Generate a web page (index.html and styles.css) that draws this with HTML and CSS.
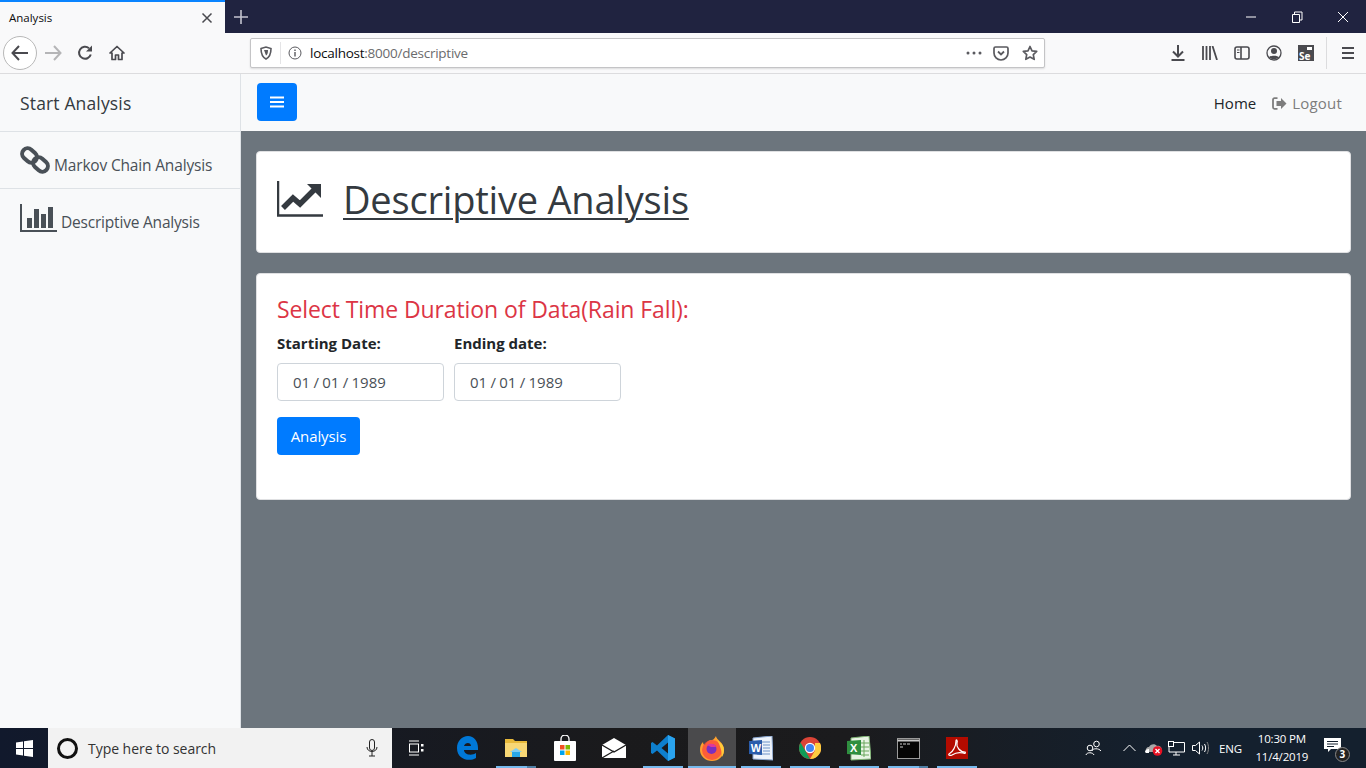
FILE: index.html
```html
<!DOCTYPE html>
<html lang="en">
<head>
  <meta charset="UTF-8">
  <meta name="viewport" content="width=device-width, initial-scale=1.0">
  <title>Analysis</title>
  <link rel="stylesheet" href="styles.css">
</head>
<body>
  <!-- browser tab strip -->
  <div class="tabstrip">
    <div class="tab">
      <span class="tab-title">Analysis</span>
      <svg class="tab-close" width="12" height="12" viewBox="0 0 12 12"><path d="M1.5 1.5l9 9M10.5 1.5l-9 9" stroke="#4a4a4f" stroke-width="1.5" fill="none"/></svg>
    </div>
    <svg class="tab-new" width="14" height="14" viewBox="0 0 14 14"><path d="M7 0v14M0 7h14" stroke="#c3c4cf" stroke-width="1.6" fill="none"/></svg>
    <div class="win-controls">
      <svg class="win-btn" width="46" height="12" viewBox="0 0 46 12"><path d="M18 6h10" stroke="#fff" fill="none"/></svg>
      <svg class="win-btn" width="46" height="12" viewBox="0 0 46 12"><path d="M18.500 3.500h7v8h-7zM20.500 3.500v-2.500h7.500v8h-2.500" stroke="#fff" fill="none"/></svg>
      <svg class="win-btn" width="46" height="12" viewBox="0 0 46 12"><path d="M18 1l10 10M28 1l-10 10" stroke="#fff" fill="none"/></svg>
    </div>
  </div>

  <!-- browser toolbar -->
  <div class="toolbar">
    <div class="back-btn">
      <svg width="18" height="16" viewBox="0 0 18 16"><path d="M8 1L1.500 8 8 15M2 8h15" stroke="#4a4a4f" stroke-width="2" fill="none"/></svg>
    </div>
    <div class="tool-btn">
      <svg width="18" height="16" viewBox="0 0 18 16"><path d="M10 1l6.500 7L10 15M16 8H1" stroke="#b5b5b7" stroke-width="2" fill="none"/></svg>
    </div>
    <div class="tool-btn">
      <svg width="16" height="16" viewBox="0 0 16 16"><path d="M13.800 9.500A6 6 0 1 1 12 3.200" stroke="#4a4a4f" stroke-width="2" fill="none"/><path d="M15 0.500v6h-6z" fill="#4a4a4f"/></svg>
    </div>
    <div class="tool-btn">
      <svg width="16" height="16" viewBox="0 0 16 16"><path d="M8 1.500L1 8h2v6.500h3.500V10h3v4.500H13V8h2z" stroke="#4a4a4f" stroke-width="1.700" fill="none" stroke-linejoin="round"/></svg>
    </div>

    <div class="urlbar">
      <svg class="url-shield" width="14" height="14" viewBox="0 0 14 14"><path d="M2 2.500L7 1l5 1.500c0 5-1 8.500-5 10.500-4-2-5-5.500-5-10.500z" stroke="#5a5a5f" stroke-width="1.600" fill="none"/><path d="M5 4h4c0 3-.5 4.500-2 5.500z" fill="#5a5a5f"/></svg>
      <span class="url-sep"></span>
      <svg width="14" height="14" viewBox="0 0 14 14"><circle cx="7" cy="7" r="6" stroke="#5a5a5f" fill="none"/><path d="M7 6v4.500M7 3.500v1.500" stroke="#5a5a5f" stroke-width="1.400"/></svg>
      <span class="url-text">localhost<span class="url-path">:8000/descriptive</span></span>
      <svg class="url-more" width="16" height="4" viewBox="0 0 16 4"><circle cx="2" cy="2" r="1.500" fill="#5a5a5f"/><circle cx="8" cy="2" r="1.500" fill="#5a5a5f"/><circle cx="14" cy="2" r="1.500" fill="#5a5a5f"/></svg>
      <svg class="url-pocket" width="16" height="15" viewBox="0 0 16 15"><path d="M2.500 1h11A1.500 1.500 0 0 1 15 2.500V7A7 7 0 0 1 1 7V2.500A1.500 1.500 0 0 1 2.500 1z" stroke="#5a5a5f" stroke-width="1.700" fill="none"/><path d="M5 5.500l3 3 3-3" stroke="#5a5a5f" stroke-width="1.800" fill="none"/></svg>
      <svg width="16" height="16" viewBox="0 0 16 16"><path d="M8 1.500l2 4.300 4.700.6-3.400 3.200.9 4.700L8 12l-4.200 2.300.9-4.700L1.300 6.400 6 5.800z" stroke="#5a5a5f" stroke-width="1.700" fill="none" stroke-linejoin="round"/></svg>
    </div>

    <div class="tool-right">
      <svg width="16" height="16" viewBox="0 0 16 16"><path d="M8 0v11M3 6.500L8 11.500l5-5" stroke="#4a4a4f" stroke-width="2" fill="none"/><path d="M1.500 15h13" stroke="#4a4a4f" stroke-width="2"/></svg>
      <svg width="16" height="14" viewBox="0 0 16 14"><path d="M1 0v14M4.500 0v14M8 0v14M10.500 0l4.500 14" stroke="#4a4a4f" stroke-width="1.800" fill="none"/></svg>
      <svg width="16" height="14" viewBox="0 0 16 14"><rect x="1" y="1" width="14" height="12" rx="2" stroke="#4a4a4f" stroke-width="1.600" fill="none"/><path d="M7 1v12" stroke="#4a4a4f" stroke-width="1.600"/><path d="M3 4h2.500M3 6.500h2.500" stroke="#4a4a4f"/></svg>
      <svg width="16" height="16" viewBox="0 0 16 16"><circle cx="8" cy="8" r="7" stroke="#4a4a4f" stroke-width="1.300" fill="none"/><circle cx="8" cy="6" r="3" fill="#4a4a4f"/><path d="M3 12.500c1-2.500 9-2.500 10 0-2.500 2-7.500 2-10 0z" fill="#4a4a4f"/></svg>
      <div class="se-ext">
        <span class="se-cam"></span>
        <span class="se-text">Se</span>
      </div>
      <span class="tool-sep"></span>
      <svg class="tool-menu" width="14" height="12" viewBox="0 0 14 12"><path d="M1 1h12M1 6h12M1 11h12" stroke="#4a4a4f" stroke-width="2"/></svg>
    </div>
  </div>

  <!-- the page itself -->
  <div class="page">
    <nav class="sidebar">
      <div class="sidebar-header">Start Analysis</div>
      <a class="side-link">
        <svg class="side-chain" width="30" height="30" viewBox="0 0 30 30">
          <rect x="1.500" y="5" width="16" height="11" rx="5.500" transform="rotate(42 9.500 10.500)" stroke="#495057" stroke-width="4" fill="none"/>
          <rect x="12.500" y="14" width="16" height="11" rx="5.500" transform="rotate(42 20.500 19.500)" stroke="#495057" stroke-width="4" fill="none"/>
        </svg>
        <span>Markov Chain Analysis</span>
      </a>
      <a class="side-link side-link-last">
        <svg class="side-bars" width="37" height="28" viewBox="0 0 37 28">
          <path d="M1 0v27h36" stroke="#495057" stroke-width="2" fill="none"/>
          <rect x="7" y="14" width="5" height="10" fill="#495057"/>
          <rect x="14" y="5" width="5" height="19" fill="#495057"/>
          <rect x="21" y="10" width="5" height="14" fill="#495057"/>
          <rect x="28" y="3" width="5" height="21" fill="#495057"/>
        </svg>
        <span>Descriptive Analysis</span>
      </a>
    </nav>

    <div class="main">
      <div class="topbar">
        <button class="burger">
          <svg width="14" height="12" viewBox="0 0 14 12"><path d="M0 1.500h14M0 6h14M0 10.500h14" stroke="#fff" stroke-width="2.200"/></svg>
        </button>
        <div class="top-links">
          <a class="top-link">Home</a>
          <a class="top-link top-link-muted">
            <svg width="15" height="13" viewBox="0 0 15 13"><path d="M5.500 1.200H2.500A1.500 1.500 0 0 0 1 2.700v7.600a1.500 1.500 0 0 0 1.500 1.500h3" stroke="#7d7d7d" stroke-width="1.800" fill="none"/><path d="M9 1l5.500 5.500L9 12V9H4.500V4H9z" fill="#7d7d7d"/></svg>
            Logout
          </a>
        </div>
      </div>

      <div class="content">
        <div class="card card-title">
          <svg width="46" height="36" viewBox="0 0 46 36">
            <path d="M1 0v34.500h45" stroke="#343a40" stroke-width="2.500" fill="none"/>
            <path d="M6 27l10-10 7 6 14-14" stroke="#343a40" stroke-width="5.500" fill="none"/>
            <path d="M30 3h14v14z" fill="#343a40"/>
          </svg>
          <h1>Descriptive Analysis</h1>
        </div>
        <div class="card card-form">
          <h4>Select Time Duration of Data(Rain Fall):</h4>
          <form class="date-form">
            <div class="date-field">
              <label>Starting Date:</label>
              <input type="text" value="01 / 01 / 1989">
            </div>
            <div class="date-field">
              <label>Ending date:</label>
              <input type="text" value="01 / 01 / 1989">
            </div>
          </form>
          <button class="btn-analysis">Analysis</button>
        </div>
      </div>
    </div>
  </div>

  <!-- windows taskbar -->
  <div class="taskbar">
    <div class="start">
      <svg width="17" height="17" viewBox="0 0 17 17"><path d="M0 2.500L7 1.500V8H0zM8 1.300L17 0v8H8zM0 9h7v6.500L0 14.500zM8 9h9v8l-9-1.300z" fill="#fff"/></svg>
    </div>
    <div class="searchbox">
      <span class="cortana"></span>
      <span class="search-text">Type here to search</span>
      <svg class="search-mic" width="12" height="18" viewBox="0 0 12 18"><rect x="3.500" y="0.500" width="5" height="11" rx="2.500" stroke="#222" fill="none"/><path d="M1 8c0 6 10 6 10 0M6 13v4M3 17h6" stroke="#222" fill="none"/></svg>
    </div>
    <div class="task-view">
      <svg width="16" height="16" viewBox="0 0 16 16"><path d="M1 1h10M1 15h10" stroke="#fff"/><rect x="1.500" y="4" width="9" height="8" stroke="#fff" fill="none"/><rect x="13" y="4" width="2.500" height="2.500" fill="#fff"/><rect x="13" y="9" width="2.500" height="2.500" fill="#fff"/></svg>
    </div>

    <div class="task-icons">
      <div class="task-cell">
        <svg width="22" height="24" viewBox="0 0 22 24"><path d="M1 12C1 5 6 0 12 0c6 0 10 5 10 12v2H8c0 5 8 6 12 3v5c-6 4-19 2-19-10zm7-2h7c0-4-6-4-7 0z" fill="#0078d7"/></svg>
      </div>
      <div class="task-cell task-cell-stack">
        <svg width="22" height="20" viewBox="0 0 22 20"><path d="M0 1h8l2 2h12v3H0z" fill="#e8b93a"/><path d="M0 5h22v14H0z" fill="#f8d775"/><path d="M7 19v-5h8v5z" fill="#29a8e8"/><path d="M5 14l6-4 6 4z" fill="#7fcdf2"/></svg>
      </div>
      <div class="task-cell">
        <svg width="22" height="26" viewBox="0 0 22 26"><path d="M7 7V4a4 4 0 0 1 8 0v3" stroke="#fff" stroke-width="1.300" fill="none"/><rect y="6" width="22" height="20" rx="1" fill="#fff"/><rect x="6" y="10" width="4.500" height="4.500" fill="#f25022"/><rect x="11.500" y="10" width="4.500" height="4.500" fill="#7fba00"/><rect x="6" y="15.500" width="4.500" height="4.500" fill="#00a4ef"/><rect x="11.500" y="15.500" width="4.500" height="4.500" fill="#ffb900"/></svg>
      </div>
      <div class="task-cell">
        <svg width="24" height="20" viewBox="0 0 24 20"><path d="M0 7L12 0l12 7v13H0z" fill="#fff"/><path d="M0 7l12 7 12-7" stroke="#1a1a1a" stroke-width="1.400" fill="none"/><path d="M0 20l12-7" stroke="#1a1a1a" stroke-width="1.200" fill="none"/></svg>
      </div>
      <div class="task-cell task-cell-open">
        <svg width="24" height="26" viewBox="0 0 24 26"><path d="M17 0l7 3.500v19L17 26 6 15.500 1.500 19 0 18v-10l1.500-1L6 10.500zm0 7.500L10.500 13l6.500 5.500z" fill="#0e7fcd"/><path d="M17 0l7 3.500v19L17 26z" fill="#2aa3ee"/></svg>
      </div>
      <div class="task-cell task-cell-active">
        <svg width="24" height="25" viewBox="0 0 24 25"><path d="M16 0c0 4 8 6 8 14a12 11 0 0 1-24 0c0-4 1-6 3-8 0 2 1 3 2 3 1-3 4-5 7-5 1 0 2-1 4-4z" fill="#ff9f2e"/><circle cx="12" cy="14" r="10" fill="#f9473d" opacity=".75"/><path d="M16 1c0 4 8 6 8 13 0 3-1 5-2 7 0-8-3-13-6-20z" fill="#ffcb3a"/><circle cx="11.500" cy="13" r="5" fill="#7b2fbf"/><path d="M7 9c3-2 8-2 9 2l-5 0z" fill="#e0389a"/></svg>
      </div>
      <div class="task-cell task-cell-open">
        <svg width="24" height="25" viewBox="0 0 24 25"><path d="M4 2l19-2 1 24-20-1z" fill="#eef3fb"/><path d="M4 2l19-2 1 24-20-1z" stroke="#8aa6cf" fill="none"/><path d="M13 6h8M14 9h7M14 12h7M14 15h7M8 18h13" stroke="#6f93c9"/><path d="M0 5l13-1v15L0 18z" fill="#2a5cab"/><text class="office-letter" x="1.800" y="15.500">W</text></svg>
      </div>
      <div class="task-cell task-cell-open">
        <svg width="22" height="22" viewBox="0 0 22 22"><circle cx="11" cy="11" r="11" fill="#db4437"/><path d="M1.500 5.500L6.500 14 11 22a11 11 0 0 1-9.500-16.500z" fill="#0f9d58"/><path d="M11 22l5-8.500 0-7.500h5a11 11 0 0 1-10 16z" fill="#ffcd40"/><circle cx="11" cy="11" r="5.200" fill="#fff"/><circle cx="11" cy="11" r="4" fill="#4285f4"/></svg>
      </div>
      <div class="task-cell task-cell-open">
        <svg width="24" height="25" viewBox="0 0 24 25"><path d="M4 2l18-2 2 23-20 1z" fill="#e8f4e4"/><path d="M4 2l18-2 2 23-20 1z" stroke="#7fb474" fill="none"/><path d="M14 7h8M14 11h8M14 15h8M14 19h8M17 4v17" stroke="#6aa75c"/><path d="M0 5l14-1v15L0 18z" fill="#2f8f3f"/><text class="office-letter" x="3" y="15.500">X</text></svg>
      </div>
      <div class="task-cell task-cell-stack">
        <svg width="23" height="21" viewBox="0 0 23 21"><rect x=".5" y=".5" width="22" height="20" fill="#050505" stroke="#9a9a9a"/><path d="M.5 2.500h22" stroke="#c9c9c9" stroke-width="2"/><path d="M3 6h2M6 6h3M10 6h3M3 9h3" stroke="#d0d0d0"/></svg>
      </div>
      <div class="task-cell task-cell-open">
        <svg width="22" height="22" viewBox="0 0 22 22"><rect width="22" height="22" fill="#b30b00"/><path d="M3 17c4-2 7-8 7-13 0-2 2-1 1 2-1 4 3 9 8 9 1 1 0 2-2 1-4-1-8 0-11 2-2 1-4 0-3-1z" stroke="#fff" stroke-width="1.200" fill="none"/></svg>
      </div>
    </div>

    <div class="tray">
      <svg class="tray-people" width="17" height="16" viewBox="0 0 17 16"><circle cx="11.500" cy="4" r="2.800" stroke="#fff" fill="none"/><path d="M7 11c.5-3 7-3 9 0" stroke="#fff" fill="none"/><circle cx="5" cy="8" r="2.800" stroke="#fff" fill="none"/><path d="M1 15c.5-3 7-3 8 0" stroke="#fff" fill="none"/></svg>
      <svg class="tray-chevron" width="13" height="8" viewBox="0 0 13 8"><path d="M.5 7l6-6 6 6" stroke="#fff" fill="none"/></svg>
      <svg class="tray-cloud" width="18" height="15" viewBox="0 0 18 15"><path d="M1 11c-1-3 1-5 3-5 1-3 6-4 8-1 3-1 5 1 5 6z" fill="#a8a8a8"/><path d="M0 11c0-2 2-3 4-3v4H1z" fill="#fff"/><circle cx="12.500" cy="10" r="4.800" fill="#e81123"/><path d="M10.500 8l4 4M14.500 8l-4 4" stroke="#fff" stroke-width="1.300"/></svg>
      <svg class="tray-network" width="17" height="15" viewBox="0 0 17 15"><path d="M5.500 1.500H16.500V11H1V6M8 11v3M5 14h7" stroke="#fff" fill="none"/><rect x=".5" y=".5" width="5" height="5" stroke="#fff" fill="#14202e"/></svg>
      <svg class="tray-volume" width="17" height="14" viewBox="0 0 17 14"><path d="M.5 4.500h3l4-3.500v12l-4-3.500h-3z" stroke="#fff" fill="none"/><path d="M10 4.500c1 1.500 1 3.500 0 5M12.500 3c1.500 2.500 1.500 5.500 0 8" stroke="#fff" fill="none"/><path d="M15 1c2 3.500 2 8.500 0 12" stroke="#888" fill="none"/></svg>
      <span class="tray-lang">ENG</span>
      <div class="tray-clock">
        <span>10:30 PM</span>
        <span>11/4/2019</span>
      </div>
      <div class="tray-notify">
        <svg width="17" height="15" viewBox="0 0 17 15"><path d="M0 0h17v11H7l-3 3v-3H0z" fill="#fff"/><path d="M3 3.500h11M3 6h11M3 8.500h7" stroke="#14202e"/></svg>
        <span class="notify-badge">3</span>
      </div>
    </div>
  </div>
</body>
</html>
```

FILE: styles.css
```css
html, body {
  height: 100%;
}

body {
  margin: 0;
  width: 1366px;
  height: 768px;
  overflow: hidden;
  display: flex;
  flex-direction: column;
  font-family: "Open Sans", "Noto Sans", sans-serif;
  color: #212529;
}

/* browser tab strip */
.tabstrip {
  height: 33px;
  flex: none;
  display: flex;
  align-items: center;
  background: #202340;
}

.tab {
  width: 225px;
  height: 33px;
  box-sizing: border-box;
  display: flex;
  align-items: center;
  justify-content: space-between;
  padding: 0 12px 0 9px;
  background: #f9f9fa;
  border-top: 2px solid #0a84ff;
}

.tab-title {
  font-size: 11.500px;
  color: #0c0c0d;
}

.tab-new {
  margin-left: 9px;
}

.win-controls {
  margin-left: auto;
  display: flex;
  height: 33px;
  align-items: center;
}

.win-btn {
  display: block;
}

/* browser toolbar */
.toolbar {
  height: 41px;
  flex: none;
  box-sizing: border-box;
  display: flex;
  align-items: center;
  padding-left: 3px;
  background: #f9f9fa;
  border-bottom: 1px solid #dcdcde;
}

.back-btn {
  width: 32px;
  height: 32px;
  flex: none;
  display: flex;
  align-items: center;
  justify-content: center;
  border: 1px solid #b8b8b8;
  border-radius: 50%;
  background: #fff;
}

.tool-btn {
  width: 32px;
  height: 32px;
  flex: none;
  display: flex;
  align-items: center;
  justify-content: center;
}

.urlbar {
  width: 795px;
  height: 30px;
  margin-left: 117px;
  box-sizing: border-box;
  flex: none;
  display: flex;
  align-items: center;
  gap: 7px;
  padding: 0 6px 0 8px;
  background: #fff;
  border: 1px solid #c4c4c6;
  border-radius: 2px;
  box-shadow: 0 1px 2px rgba(0, 0, 0, 0.12);
}

.url-sep {
  width: 1px;
  height: 22px;
  background: #e4e4e6;
}

.url-text {
  flex: 1;
  margin-left: 1px;
  font-size: 13.500px;
  letter-spacing: -0.25px;
  color: #0c0c0d;
}

.url-path {
  color: #6b6b6d;
}

.url-more {
  margin-right: 4px;
}

.url-pocket {
  margin-right: 6px;
}

.tool-right {
  flex: 1;
  display: flex;
  align-items: center;
  gap: 16px;
  padding-left: 125px;
}

.se-ext {
  width: 16px;
  height: 16px;
  position: relative;
  background: #4a4a4f;
}

.se-cam {
  position: absolute;
  top: 2px;
  right: 2px;
  width: 5px;
  height: 3px;
  background: #fff;
}

.se-text {
  position: absolute;
  left: 1px;
  bottom: 0;
  font-size: 10px;
  line-height: 10px;
  font-weight: 700;
  color: #fff;
}

.tool-sep {
  width: 1px;
  height: 32px;
  margin-left: -4px;
  background: #dcdcde;
}

.tool-menu {
  margin-left: -2px;
}

/* page */
.page {
  flex: 1;
  min-height: 0;
  display: flex;
}

.sidebar {
  width: 241px;
  flex: none;
  box-sizing: border-box;
  background: #f8f9fa;
  border-right: 1px solid #dee2e6;
}

.sidebar-header {
  height: 58px;
  box-sizing: border-box;
  padding-left: 20px;
  font-size: 17.500px;
  line-height: 58px;
  letter-spacing: 0.15px;
  color: #343a40;
  border-bottom: 1px solid #dee2e6;
}

.side-link {
  height: 57px;
  box-sizing: border-box;
  display: flex;
  align-items: flex-end;
  padding: 0 0 12px 20px;
  gap: 5px;
  font-size: 15.500px;
  letter-spacing: -0.17px;
  line-height: 22px;
  color: #495057;
  border-bottom: 1px solid #dee2e6;
}

.side-link-last {
  border-bottom: none;
  padding-bottom: 13px;
  gap: 4px;
  letter-spacing: -0.2px;
}

.side-chain {
  display: block;
  margin-bottom: 1px;
  margin-right: -1px;
}

.side-bars {
  display: block;
  margin-bottom: 1px;
}

.main {
  flex: 1;
  min-width: 0;
  display: flex;
  flex-direction: column;
  background: #6c757d;
}

.topbar {
  height: 57px;
  flex: none;
  box-sizing: border-box;
  display: flex;
  align-items: center;
  justify-content: space-between;
  padding: 0 24px 1px 16px;
  background: #f8f9fa;
}

.burger {
  width: 40px;
  height: 38px;
  display: flex;
  align-items: center;
  justify-content: center;
  padding: 0;
  border: none;
  border-radius: 4px;
  background: #007bff;
}

.top-links {
  display: flex;
  align-items: center;
  gap: 16px;
  padding-top: 2px;
}

.top-link {
  display: flex;
  align-items: center;
  gap: 5px;
  font-size: 15px;
  color: #212529;
}

.top-link-muted {
  color: #7d7d7d;
  letter-spacing: 0.2px;
}

.content {
  flex: 1;
  display: flex;
  flex-direction: column;
  gap: 20px;
  padding: 20px 15px 0;
}

.card {
  box-sizing: border-box;
  background: #fff;
  border: 1px solid #dfe0e2;
  border-radius: 4px;
}

.card-title {
  height: 102px;
  display: flex;
  align-items: flex-start;
  gap: 20px;
  padding: 29px 20px 0;
}

.card-title h1 {
  margin: 0;
  font-size: 38px;
  font-weight: 400;
  line-height: 36px;
  letter-spacing: -0.2px;
  color: #343a40;
  text-decoration: underline;
  text-decoration-thickness: 2px;
  text-underline-offset: 4px;
}

.card-form {
  height: 227px;
  padding: 19px 20px 0;
}

.card-form h4 {
  margin: 0 0 8px;
  font-size: 23px;
  font-weight: 400;
  line-height: 32px;
  letter-spacing: -0.1px;
  color: #dc3545;
}

.date-form {
  display: flex;
  gap: 10px;
}

.date-field {
  width: 167px;
}

.date-field label {
  display: block;
  margin-bottom: 10px;
  font-size: 15px;
  font-weight: 700;
  line-height: 20px;
  color: #212529;
}

.date-field input {
  width: 100%;
  height: 38px;
  box-sizing: border-box;
  padding: 0 15px;
  font-family: inherit;
  font-size: 15px;
  word-spacing: -0.6px;
  color: #495057;
  background: #fff;
  border: 1px solid #ced4da;
  border-radius: 4px;
}

.btn-analysis {
  display: block;
  width: 83px;
  height: 38px;
  margin-top: 16px;
  padding: 0;
  font-family: inherit;
  font-size: 15px;
  letter-spacing: -0.1px;
  color: #fff;
  background: #007bff;
  border: none;
  border-radius: 4px;
}

/* windows taskbar */
.taskbar {
  height: 40px;
  flex: none;
  display: flex;
  align-items: stretch;
  background: linear-gradient(90deg, #11192c 0, #1a1a1c 45%, #1b1b1d 62%, #14202e 85%, #14202e 100%);
}

.start {
  width: 48px;
  flex: none;
  display: flex;
  align-items: center;
  justify-content: center;
}

.searchbox {
  width: 344px;
  flex: none;
  box-sizing: border-box;
  display: flex;
  align-items: center;
  padding: 0 14px 0 9px;
  background: #f2f2f2;
}

.cortana {
  width: 15px;
  height: 15px;
  border: 3px solid #111;
  border-radius: 50%;
}

.search-text {
  flex: 1;
  margin-left: 10px;
  font-size: 14px;
  letter-spacing: -0.04px;
  color: #333;
}

.task-view {
  width: 51px;
  flex: none;
  box-sizing: border-box;
  display: flex;
  align-items: center;
  padding-left: 16px;
}

.task-icons {
  display: flex;
  gap: 1px;
}

.task-cell {
  width: 48px;
  display: flex;
  align-items: center;
  justify-content: center;
}

/* running apps get a 40px line along the bottom */
.task-cell-open {
  background: linear-gradient(#76b9ed, #76b9ed) center bottom / 40px 2px no-repeat;
}

.task-cell-stack {
  background: linear-gradient(90deg, #76b9ed 0, #76b9ed 31px, #4f7fa5 31px) center bottom / 40px 2px no-repeat;
}

.task-cell-active {
  background: linear-gradient(#76b9ed, #76b9ed) center bottom / 48px 2px no-repeat, #4a4a4c;
}

.office-letter {
  font-family: "Liberation Sans", sans-serif;
  font-size: 11px;
  font-weight: 700;
  fill: #fff;
}

.tray {
  flex: 1;
  display: flex;
  align-items: center;
  padding-left: 104px;
  color: #fff;
}

.tray-chevron {
  margin-left: 21px;
}

.tray-cloud {
  margin-left: 9px;
}

.tray-network {
  margin-left: 5px;
}

.tray-volume {
  margin-left: 7px;
}

.tray-lang {
  margin-left: 10px;
  font-size: 11.500px;
  letter-spacing: -0.2px;
}

.tray-clock {
  width: 60px;
  margin-left: 10px;
  display: flex;
  flex-direction: column;
  align-items: center;
  font-size: 11.500px;
  line-height: 18px;
  letter-spacing: -0.2px;
}

.tray-notify {
  width: 22px;
  height: 24px;
  margin-left: 12px;
  position: relative;
}

.notify-badge {
  position: absolute;
  right: -4px;
  bottom: -2px;
  width: 15px;
  height: 15px;
  box-sizing: border-box;
  border: 1px solid #888;
  border-radius: 50%;
  font-size: 10px;
  font-weight: 700;
  line-height: 13px;
  text-align: center;
  color: #fff;
  background: #222;
}
```
